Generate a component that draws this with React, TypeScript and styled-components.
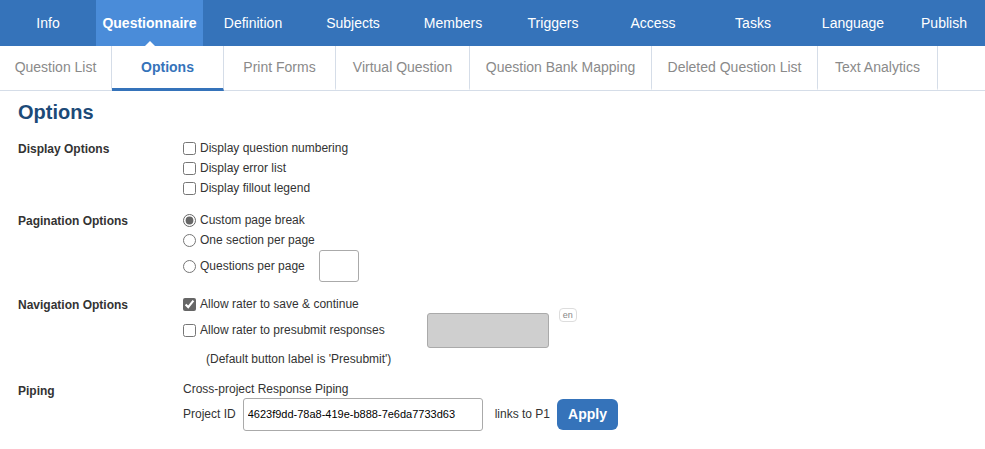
import React from 'react';
import styled, { createGlobalStyle } from 'styled-components';

const Global = createGlobalStyle`
  body { margin: 0; font-family: 'Liberation Sans', Arial, sans-serif; background: #fff; color: #333; }
`;

const TopNav = styled.div`
  display: flex;
  height: 46px;
  background: #3573ba;
`;

const TopItem = styled.div<{ $w: number; $active?: boolean }>`
  position: relative;
  width: ${(p) => p.$w}px;
  flex-shrink: 0;
  display: flex;
  align-items: center;
  justify-content: center;
  color: #fff;
  font-size: 14px;
  font-weight: ${(p) => (p.$active ? 'bold' : 'normal')};
  background: ${(p) => (p.$active ? '#4a8cd9' : 'transparent')};
  &::after {
    content: '';
    display: ${(p) => (p.$active ? 'block' : 'none')};
    position: absolute;
    bottom: 0;
    left: 50%;
    margin-left: -5px;
    border: 5px solid transparent;
    border-bottom-color: #fff;
    border-top: 0;
  }
`;

const SubNav = styled.div`
  display: flex;
  height: 44px;
  border-bottom: 1px solid #d5dde8;
`;

const SubItem = styled.div<{ $w: number; $active?: boolean }>`
  width: ${(p) => p.$w}px;
  flex-shrink: 0;
  box-sizing: border-box;
  display: flex;
  align-items: center;
  justify-content: center;
  font-size: 14px;
  color: ${(p) => (p.$active ? '#3573ba' : '#8a8a8a')};
  font-weight: ${(p) => (p.$active ? 'bold' : 'normal')};
  border-right: 1px solid #d5dde8;
  border-bottom: 3px solid ${(p) => (p.$active ? '#3573ba' : 'transparent')};
  margin-bottom: -1px;
`;

const Content = styled.div`
  padding: 10px 18px;
`;

const Title = styled.h1`
  margin: 0 0 16px;
  font-size: 20px;
  font-weight: bold;
  color: #1c4a78;
`;

const Section = styled.div`
  display: grid;
  grid-template-columns: 165px 1fr;
  margin-bottom: 16px;
`;

const Label = styled.div`
  font-size: 12px;
  font-weight: bold;
  color: #333;
  padding-top: 2px;
`;

const Options = styled.div`
  display: flex;
  flex-direction: column;
  gap: 4px;
  font-size: 12px;
`;

const Row = styled.label<{ $tall?: boolean }>`
  display: flex;
  align-items: center;
  gap: 2px;
  height: 16px;
  margin: ${(p) => (p.$tall ? '6px 0' : '0')};
`;

const Box = styled.input`
  margin: 0 2px 0 0;
  width: 13px;
  height: 13px;
  accent-color: #666;
`;

const SmallInput = styled.input`
  width: 40px;
  height: 32px;
  box-sizing: border-box;
  margin-left: 12px;
  border: 1px solid #aaa;
  border-radius: 3px;
`;

const GreyInput = styled.div`
  width: 120px;
  height: 33px;
  margin-left: 40px;
  background: #cfcfcf;
  border: 1px solid #aaa;
  border-radius: 3px;
`;

const Lang = styled.span`
  align-self: flex-start;
  margin: -14px 0 0 8px;
  font-size: 9px;
  color: #888;
  border: 1px solid #ddd;
  border-radius: 4px;
  padding: 1px 3px;
`;

const Note = styled.div`
  padding: 4px 0 0 23px;
`;

const IdInput = styled.input`
  width: 240px;
  height: 33px;
  box-sizing: border-box;
  margin: 0 10px 0 5px;
  border: 1px solid #aaa;
  border-radius: 3px;
  font: 11px 'Liberation Sans', Arial, sans-serif;
  padding: 0 4px;
  color: #000;
`;

const ApplyBtn = styled.button`
  margin-left: 5px;
  height: 31px;
  padding: 0 11px;
  background: #3573ba;
  color: #fff;
  border: 0;
  border-radius: 6px;
  font: bold 14px 'Liberation Sans', Arial, sans-serif;
`;

const top: [string, number][] = [
  ['Info', 96], ['Questionnaire', 107], ['Definition', 100], ['Subjects', 100], ['Members', 100],
  ['Triggers', 100], ['Access', 100], ['Tasks', 100], ['Language', 100], ['Publish', 82],
];
const sub: [string, number][] = [
  ['Question List', 112], ['Options', 112], ['Print Forms', 112], ['Virtual Question', 134],
  ['Question Bank Mapping', 182], ['Deleted Question List', 166], ['Text Analytics', 120],
];

export default function App() {
  return (
    <>
      <Global />
      <TopNav>
        {top.map(([t, w]) => (
          <TopItem key={t} $w={w} $active={t === 'Questionnaire'}>{t}</TopItem>
        ))}
      </TopNav>
      <SubNav>
        {sub.map(([t, w]) => (
          <SubItem key={t} $w={w} $active={t === 'Options'}>{t}</SubItem>
        ))}
      </SubNav>
      <Content>
        <Title>Options</Title>
        <Section>
          <Label>Display Options</Label>
          <Options>
            <Row><Box type="checkbox" />Display question numbering</Row>
            <Row><Box type="checkbox" />Display error list</Row>
            <Row><Box type="checkbox" />Display fillout legend</Row>
          </Options>
        </Section>
        <Section>
          <Label>Pagination Options</Label>
          <Options>
            <Row><Box type="radio" name="p" defaultChecked />Custom page break</Row>
            <Row><Box type="radio" name="p" />One section per page</Row>
            <Row $tall><Box type="radio" name="p" />Questions per page<SmallInput /></Row>
          </Options>
        </Section>
        <Section>
          <Label>Navigation Options</Label>
          <Options>
            <Row><Box type="checkbox" defaultChecked />Allow rater to save &amp; continue</Row>
            <Row $tall><Box type="checkbox" />Allow rater to presubmit responses<GreyInput /><Lang>en</Lang></Row>
            <Note>(Default button label is 'Presubmit')</Note>
          </Options>
        </Section>
        <Section>
          <Label>Piping</Label>
          <Options>
            <div>Cross-project Response Piping</div>
            <Row $tall>Project ID<IdInput defaultValue="4623f9dd-78a8-419e-b888-7e6da7733d63" />links to P1<ApplyBtn>Apply</ApplyBtn></Row>
          </Options>
        </Section>
      </Content>
    </>
  );
}
